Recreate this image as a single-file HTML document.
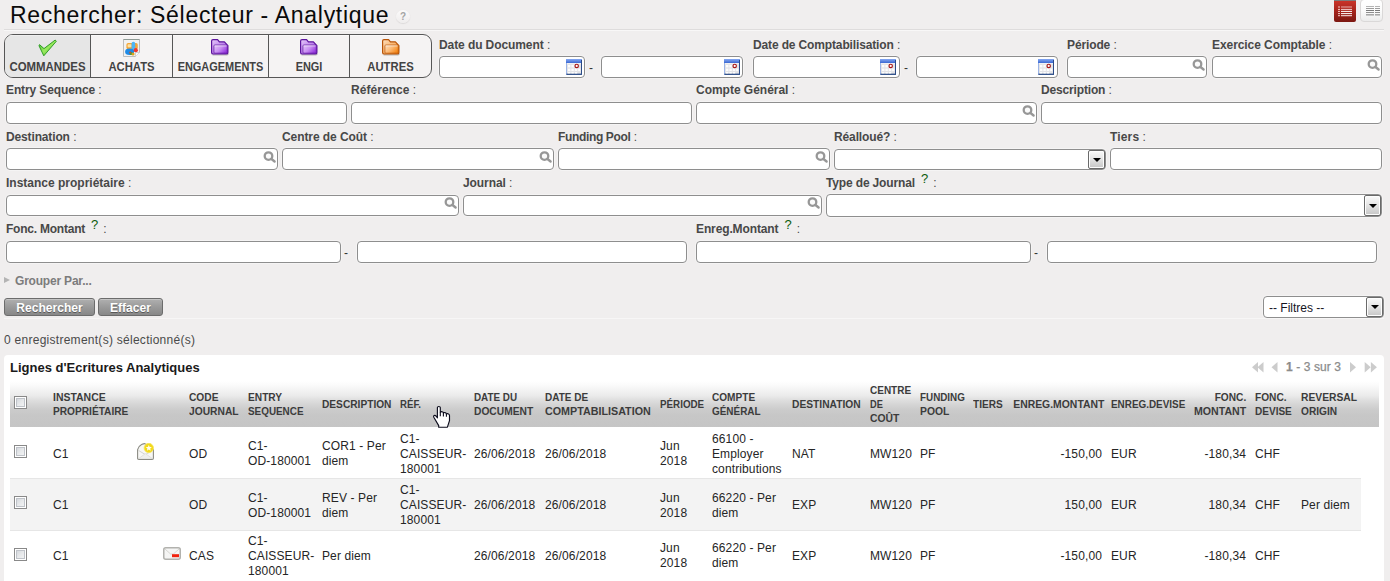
<!DOCTYPE html>
<html lang="fr">
<head>
<meta charset="utf-8">
<title>Rechercher: Sélecteur - Analytique</title>
<style>
html,body{margin:0;padding:0;}
body{width:1390px;height:581px;overflow:hidden;background:#f0eeee;font-family:"Liberation Sans",Arial,Helvetica,sans-serif;font-size:12px;color:#252525;position:relative;}
h1{position:absolute;left:10px;top:2px;margin:0;font-size:23px;font-weight:normal;color:#0a0a0a;line-height:27px;white-space:nowrap;letter-spacing:0.7px;}
.help{position:absolute;left:396px;top:10px;width:14px;height:13px;border-radius:50%;background:linear-gradient(#fbfafa,#efeded);box-shadow:0 1px 1px #dcdada,0 0 1px #e6e4e4;color:#a4a4a4;font-size:10px;font-weight:bold;line-height:13px;text-align:center;}
.hr{position:absolute;left:4px;width:1380px;top:29px;height:1px;background:#dedcdc;border-bottom:1px solid #f8f7f7;}
.vbtn{position:absolute;top:0;width:22px;height:22px;box-sizing:border-box;}
.vbtn svg{position:absolute;left:0;top:0;}
.vbtn.on{left:1334px;background:linear-gradient(#c93429 0%,#a8241c 45%,#7c1711 100%);border-top:1px solid #7c7c7c;border-radius:0 0 2px 2px;}
.vbtn.off{left:1360px;top:-1px;width:23px;height:23px;background:linear-gradient(#ffffff 0%,#fbfbfb 50%,#ececec 100%);border:1px solid #dad8d8;border-radius:4px;}
.vbtn.off svg{left:0.5px;top:1px;}
.tabs{position:absolute;left:4px;top:34px;width:428px;height:44px;box-sizing:border-box;border:1px solid #565656;border-radius:9px;background:#f5f3f3;overflow:hidden;box-shadow:inset 0 1px 0 #fbfafa;}
.tab{position:absolute;top:0;height:42px;box-sizing:border-box;border-left:1px solid #565656;text-align:center;}
.tab:first-child{border-left:0;background:#e6e6e6;box-shadow:inset 0 1px 0 #efefef;}
.tab svg{position:absolute;overflow:visible;}
.tab span{position:absolute;left:0;right:0;top:25px;font-size:12px;font-weight:bold;line-height:14px;color:#424242;white-space:nowrap;}
.fld{position:absolute;height:42px;}
.fld label{position:absolute;left:0;top:0;font-weight:bold;font-size:12px;line-height:14px;color:#484848;white-space:nowrap;}
.fld label i{font-style:normal;font-weight:normal;letter-spacing:0;}
.fld label b.q{font-weight:normal;color:#0b5c0b;font-size:13px;position:relative;top:-4px;margin:0 5px 0 6px;letter-spacing:0;}
.inp{position:absolute;box-sizing:border-box;background:#fff;border:1px solid #8e8e8e;border-radius:4px;box-shadow:0 0 0 1px rgba(255,255,255,0.35);}
.dash{position:absolute;font-size:12px;line-height:14px;color:#333;}
.ico{position:absolute;}
.grp{position:absolute;left:4px;top:274px;font-size:12px;font-weight:bold;line-height:14px;color:#7c7c7c;white-space:nowrap;letter-spacing:-0.2px;}
.grp i{position:absolute;left:0;top:3px;width:0;height:0;border-left:6px solid #b4b4b4;border-top:3.5px solid transparent;border-bottom:3.5px solid transparent;}
.grp span{margin-left:11px;}
.btn{position:absolute;top:298px;height:18px;box-sizing:border-box;border:1px solid #6c6c6c;border-radius:3px;background:linear-gradient(#b0b0b0 0%,#9a9a9a 50%,#888888 100%);color:#fff;font-size:12px;font-weight:bold;line-height:16px;padding-top:1px;text-align:center;text-shadow:0 1px 0 #585858;letter-spacing:0.05px;box-shadow:inset 0 1px 0 #c4c4c4;}
.sline{position:absolute;left:4px;width:1380px;top:318px;height:1px;background:#f7f6f6;}
.arr{position:absolute;right:0;top:0;bottom:0;width:17px;box-sizing:border-box;border:1px solid #6a6a6a;border-radius:2px;background:linear-gradient(#fafafa 0%,#e6e6e6 45%,#c6c6c6 100%);box-shadow:inset 0 0 0 1px #fdfdfd;}
.arr:after{content:"";position:absolute;left:3.5px;top:50%;margin-top:-2px;border-top:4.5px solid #000;border-left:4px solid transparent;border-right:4px solid transparent;}
.count{position:absolute;left:4px;top:333px;font-size:12px;line-height:14px;color:#4a4a4a;letter-spacing:0.27px;white-space:nowrap;}
.panel{position:absolute;left:4px;top:355px;width:1380px;height:240px;background:#fff;border-radius:4px;}
.ptitle{position:absolute;left:6px;top:5px;font-size:13px;font-weight:bold;line-height:15px;color:#1a1a1a;white-space:nowrap;}
.pager{position:absolute;left:1282px;top:5px;font-size:12px;line-height:14px;color:#8c8c8c;white-space:nowrap;letter-spacing:0.1px;-webkit-text-stroke:0.25px #8c8c8c;}
.pg{position:absolute;top:7px;}
table.grid{position:absolute;left:6px;top:26px;width:1369px;border-collapse:collapse;table-layout:fixed;}
table.grid th{height:46px;padding:0 0 0 4px;text-align:left;vertical-align:middle;font-size:11px;font-weight:bold;line-height:14px;color:#3c3c3c;white-space:nowrap;}
table.grid th span{display:block;width:max-content;transform-origin:0 50%;}
table.grid th.r span{margin-left:auto;transform-origin:100% 50%;}
table.grid thead tr{background:linear-gradient(#ffffff 0%,#fafafa 10%,#ebebeb 31%,#dedede 41%,#d3d3d3 52%,#cbcbcb 62%,#c7c7c7 73%,#c5c5c5 100%);}
table.grid td{padding:2px 0 0 4px;vertical-align:middle;font-size:12px;line-height:15px;color:#252525;border-top:1px solid #e6e6e6;letter-spacing:0.12px;}
table.grid td.x{border-top:1px solid #fff;background:#fff !important;}
table.grid tr.first td{border-top-color:#fff;}
table.grid .r{text-align:right;padding-left:0;padding-right:5px;}
table.grid tr.even td{background:#f3f3f3;}
table.grid svg{display:block;}
.cb{display:block;position:relative;top:-3px;width:11px;height:11px;border:1px solid #898989;background:linear-gradient(135deg,#ccd0d6 0%,#e6e8ea 50%,#f8f8f8 100%);box-shadow:inset 0 0 0 1px #ffffff,inset 0 0 0 2px #bfc3c9;}
table.grid tr.last .cb{top:-2px;}
table.grid th span.cb{top:-2px;width:11px;transform:none;}
.hand{position:absolute;left:433px;top:406px;overflow:visible;}
</style>
</head>
<body>
<h1>Rechercher: Sélecteur - Analytique</h1>
<div class="help">?</div>
<div class="hr"></div>
<div class="vbtn on"><svg width="22" height="22" viewBox="0 0 22 22"><rect x="4" y="5.5" width="2" height="1" fill="#f3c9c6"/><rect x="7" y="5.5" width="11" height="1" fill="#e9aeaa"/><rect x="4" y="7.9" width="2" height="1" fill="#f3c9c6"/><rect x="7" y="7.9" width="11" height="1" fill="#f3cfcc"/><rect x="4" y="9.9" width="2" height="1" fill="#f3c9c6"/><rect x="7" y="9.9" width="11" height="1" fill="#ffffff"/><rect x="4" y="12.1" width="2" height="1" fill="#f3c9c6"/><rect x="7" y="12.1" width="11" height="1" fill="#ffffff"/><rect x="4" y="14.2" width="2" height="1" fill="#f3c9c6"/><rect x="7" y="14.2" width="11" height="1" fill="#fbeceb"/></svg></div>
<div class="vbtn off"><svg width="22" height="22" viewBox="0 0 22 22"><rect x="4" y="5" width="8" height="1" fill="#b4b4b4"/><rect x="13" y="5" width="5" height="1" fill="#b4b4b4"/><rect x="4" y="7" width="8" height="1" fill="#9c9c9c"/><rect x="13" y="7" width="5" height="1" fill="#9c9c9c"/><rect x="4" y="9" width="8" height="1" fill="#7a7a7a"/><rect x="13" y="9" width="5" height="1" fill="#7a7a7a"/><rect x="4" y="11" width="8" height="1" fill="#8e8e8e"/><rect x="13" y="11" width="5" height="1" fill="#8e8e8e"/><rect x="4" y="13" width="8" height="1" fill="#a8a8a8"/><rect x="13" y="13" width="5" height="1" fill="#a8a8a8"/><rect x="4" y="14" width="8" height="1" fill="#c8c8c8"/><rect x="13" y="14" width="5" height="1" fill="#c8c8c8"/></svg></div>
<div class="tabs">
<div class="tab" style="left:0px;width:85px"><svg style="left:34px;top:5px" width="18" height="17" viewBox="0 0 18 17"><defs><linearGradient id="ck" x1="0" y1="0" x2="1" y2="1"><stop offset="0" stop-color="#3fb82e"/><stop offset="0.5" stop-color="#9bea5e"/><stop offset="1" stop-color="#2f9e22"/></linearGradient></defs><path d="M0.5 4.6 L5 8.6 L16.2 0 L17.3 1.3 L4.8 15.8 L0 5.8 Z" fill="url(#ck)" stroke="#22961c" stroke-width="0.9" stroke-linejoin="round"/></svg><span style="transform:scaleX(0.952)">COMMANDES</span></div>
<div class="tab" style="left:85px;width:82px"><svg style="left:32px;top:4px" width="18" height="19" viewBox="0 0 18 19"><path d="M0.5 0.5 H16.5 V13.5 L12.5 17.5 H0.5 Z" fill="#f2f2f2" stroke="#bcbcbc"/><path d="M0.5 0.5 H16.5" stroke="#8e9a94" stroke-width="1.2"/><path d="M12.5 17.5 V13.5 H16.5" fill="#fdfdfd" stroke="#c8c8c8" stroke-width="0.8"/><rect x="3.4" y="4" width="11.4" height="6.4" rx="1.8" fill="#f4a63a"/><rect x="4.6" y="5.2" width="4" height="3" rx="0.8" fill="#fbe3a8"/><rect x="8.6" y="2.8" width="3.6" height="9.6" rx="1.7" fill="#4db5f6"/><ellipse cx="6.6" cy="12.8" rx="4.5" ry="3.2" fill="#1e8ae6"/><circle cx="8.2" cy="14.6" r="1.5" fill="#3da23a"/><circle cx="10" cy="14.9" r="1.5" fill="#e0a018"/><circle cx="7.2" cy="13.6" r="1" fill="#d8452a"/><circle cx="12.8" cy="11.2" r="2.1" fill="#ee3a30"/></svg><span style="transform:scaleX(0.939)">ACHATS</span></div>
<div class="tab" style="left:167px;width:96px"><svg style="left:38px;top:4px" width="18" height="17" viewBox="0 0 18 17"><defs><linearGradient id="fpa" x1="0" y1="0" x2="1" y2="1"><stop offset="0" stop-color="#e6ccfa"/><stop offset="1" stop-color="#9a3de0"/></linearGradient><linearGradient id="fpb" x1="0" y1="0" x2="1" y2="0.6"><stop offset="0" stop-color="#e6ccfa"/><stop offset="0.55" stop-color="#c88ef2"/><stop offset="1" stop-color="#9a3de0"/></linearGradient></defs><path d="M1.6 15.9 H16 Q17.4 15.9 17.4 14.6" fill="none" stroke="#6e6e66" stroke-width="1" opacity="0.55"/><path d="M0.6 2 Q0.6 0.6 2 0.6 L6.6 0.6 L8.4 2.8 L13.4 2.8 L16.9 6.6 L16.9 13.6 Q16.9 15 15.4 15 L2.2 15 Q0.6 15 0.6 13.4 Z" fill="url(#fpa)" stroke="#5c149c" stroke-width="1.2" stroke-linejoin="round"/><path d="M2.9 7 Q2.9 6 3.9 6 L15.4 6 Q16.3 6 16.3 7 L16.3 13.2 Q16.3 14.2 15.3 14.2 L3.9 14.2 Q2.9 14.2 2.9 13.2 Z" fill="url(#fpb)" stroke="#5c149c" stroke-width="0.9" stroke-opacity="0.8"/><path d="M3.6 6.9 H15.6" stroke="#ffffff" stroke-width="0.8" opacity="0.75"/></svg><span style="transform:scaleX(0.911)">ENGAGEMENTS</span></div>
<div class="tab" style="left:263px;width:81px"><svg style="left:31px;top:4px" width="18" height="17" viewBox="0 0 18 17"><defs><linearGradient id="fqa" x1="0" y1="0" x2="1" y2="1"><stop offset="0" stop-color="#e6ccfa"/><stop offset="1" stop-color="#9a3de0"/></linearGradient><linearGradient id="fqb" x1="0" y1="0" x2="1" y2="0.6"><stop offset="0" stop-color="#e6ccfa"/><stop offset="0.55" stop-color="#c88ef2"/><stop offset="1" stop-color="#9a3de0"/></linearGradient></defs><path d="M1.6 15.9 H16 Q17.4 15.9 17.4 14.6" fill="none" stroke="#6e6e66" stroke-width="1" opacity="0.55"/><path d="M0.6 2 Q0.6 0.6 2 0.6 L6.6 0.6 L8.4 2.8 L13.4 2.8 L16.9 6.6 L16.9 13.6 Q16.9 15 15.4 15 L2.2 15 Q0.6 15 0.6 13.4 Z" fill="url(#fqa)" stroke="#5c149c" stroke-width="1.2" stroke-linejoin="round"/><path d="M2.9 7 Q2.9 6 3.9 6 L15.4 6 Q16.3 6 16.3 7 L16.3 13.2 Q16.3 14.2 15.3 14.2 L3.9 14.2 Q2.9 14.2 2.9 13.2 Z" fill="url(#fqb)" stroke="#5c149c" stroke-width="0.9" stroke-opacity="0.8"/><path d="M3.6 6.9 H15.6" stroke="#ffffff" stroke-width="0.8" opacity="0.75"/></svg><span style="transform:scaleX(0.91)">ENGI</span></div>
<div class="tab" style="left:344px;width:82px"><svg style="left:32px;top:4px" width="18" height="17" viewBox="0 0 18 17"><defs><linearGradient id="foa" x1="0" y1="0" x2="1" y2="1"><stop offset="0" stop-color="#fde0c0"/><stop offset="1" stop-color="#f58a1e"/></linearGradient><linearGradient id="fob" x1="0" y1="0" x2="1" y2="0.6"><stop offset="0" stop-color="#fde0c0"/><stop offset="0.55" stop-color="#fbb873"/><stop offset="1" stop-color="#f58a1e"/></linearGradient></defs><path d="M1.6 15.9 H16 Q17.4 15.9 17.4 14.6" fill="none" stroke="#6e6e66" stroke-width="1" opacity="0.55"/><path d="M0.6 2 Q0.6 0.6 2 0.6 L6.6 0.6 L8.4 2.8 L13.4 2.8 L16.9 6.6 L16.9 13.6 Q16.9 15 15.4 15 L2.2 15 Q0.6 15 0.6 13.4 Z" fill="url(#foa)" stroke="#b85408" stroke-width="1.2" stroke-linejoin="round"/><path d="M2.9 7 Q2.9 6 3.9 6 L15.4 6 Q16.3 6 16.3 7 L16.3 13.2 Q16.3 14.2 15.3 14.2 L3.9 14.2 Q2.9 14.2 2.9 13.2 Z" fill="url(#fob)" stroke="#b85408" stroke-width="0.9" stroke-opacity="0.8"/><path d="M3.6 6.9 H15.6" stroke="#ffffff" stroke-width="0.8" opacity="0.75"/></svg><span style="transform:scaleX(0.941)">AUTRES</span></div>
</div>
<div class="fld" style="left:439px;top:38px"><label style="letter-spacing:-0.09px">Date du Document<i> :</i></label><span class="inp" style="left:0px;top:18px;width:146px;height:22px"><svg class="ico" style="left:126px;top:2px" width="16" height="16" viewBox="0 0 16 16"><defs><linearGradient id="cg1" x1="0" y1="0" x2="0" y2="1"><stop offset="0" stop-color="#86a8f2"/><stop offset="1" stop-color="#3a68d2"/></linearGradient></defs><rect x="0" y="0" width="16" height="16" fill="#e3e3e6"/><rect x="0" y="0" width="16" height="4" fill="url(#cg1)"/><rect x="0" y="4" width="1" height="12" fill="#9cb4e6"/><rect x="15" y="1" width="1" height="15" fill="#2b4a86"/><rect x="0.5" y="14.6" width="15.5" height="1.4" fill="#35558e"/><path d="M1 4.6H15" stroke="#f6f6f8" stroke-width="0.8"/><g fill="#fdfdfd"><rect x="2" y="6" width="2.4" height="2.4"/><rect x="5.4" y="6" width="2.4" height="2.4"/><rect x="2" y="9.6" width="2.4" height="2.4"/><rect x="5.4" y="9.6" width="2.4" height="2.4"/><rect x="8.8" y="9.6" width="2.4" height="2.4"/><rect x="12.2" y="9.6" width="2" height="2.4"/><rect x="2" y="13" width="2.4" height="1.4"/><rect x="5.4" y="13" width="2.4" height="1.4"/><rect x="8.8" y="13" width="2.4" height="1.4"/></g><circle cx="10.7" cy="6.9" r="1.7" fill="#ffffff" stroke="#a81616" stroke-width="1.15"/></svg></span><span class="dash" style="left:150px;top:23px">-</span><span class="inp" style="left:162px;top:18px;width:142px;height:22px"><svg class="ico" style="left:122px;top:2px" width="16" height="16" viewBox="0 0 16 16"><defs><linearGradient id="cg2" x1="0" y1="0" x2="0" y2="1"><stop offset="0" stop-color="#86a8f2"/><stop offset="1" stop-color="#3a68d2"/></linearGradient></defs><rect x="0" y="0" width="16" height="16" fill="#e3e3e6"/><rect x="0" y="0" width="16" height="4" fill="url(#cg2)"/><rect x="0" y="4" width="1" height="12" fill="#9cb4e6"/><rect x="15" y="1" width="1" height="15" fill="#2b4a86"/><rect x="0.5" y="14.6" width="15.5" height="1.4" fill="#35558e"/><path d="M1 4.6H15" stroke="#f6f6f8" stroke-width="0.8"/><g fill="#fdfdfd"><rect x="2" y="6" width="2.4" height="2.4"/><rect x="5.4" y="6" width="2.4" height="2.4"/><rect x="2" y="9.6" width="2.4" height="2.4"/><rect x="5.4" y="9.6" width="2.4" height="2.4"/><rect x="8.8" y="9.6" width="2.4" height="2.4"/><rect x="12.2" y="9.6" width="2" height="2.4"/><rect x="2" y="13" width="2.4" height="1.4"/><rect x="5.4" y="13" width="2.4" height="1.4"/><rect x="8.8" y="13" width="2.4" height="1.4"/></g><circle cx="10.7" cy="6.9" r="1.7" fill="#ffffff" stroke="#a81616" stroke-width="1.15"/></svg></span></div>
<div class="fld" style="left:753px;top:38px"><label style="letter-spacing:-0.14px">Date de Comptabilisation<i> :</i></label><span class="inp" style="left:0px;top:18px;width:147px;height:22px"><svg class="ico" style="left:126px;top:2px" width="16" height="16" viewBox="0 0 16 16"><defs><linearGradient id="cg3" x1="0" y1="0" x2="0" y2="1"><stop offset="0" stop-color="#86a8f2"/><stop offset="1" stop-color="#3a68d2"/></linearGradient></defs><rect x="0" y="0" width="16" height="16" fill="#e3e3e6"/><rect x="0" y="0" width="16" height="4" fill="url(#cg3)"/><rect x="0" y="4" width="1" height="12" fill="#9cb4e6"/><rect x="15" y="1" width="1" height="15" fill="#2b4a86"/><rect x="0.5" y="14.6" width="15.5" height="1.4" fill="#35558e"/><path d="M1 4.6H15" stroke="#f6f6f8" stroke-width="0.8"/><g fill="#fdfdfd"><rect x="2" y="6" width="2.4" height="2.4"/><rect x="5.4" y="6" width="2.4" height="2.4"/><rect x="2" y="9.6" width="2.4" height="2.4"/><rect x="5.4" y="9.6" width="2.4" height="2.4"/><rect x="8.8" y="9.6" width="2.4" height="2.4"/><rect x="12.2" y="9.6" width="2" height="2.4"/><rect x="2" y="13" width="2.4" height="1.4"/><rect x="5.4" y="13" width="2.4" height="1.4"/><rect x="8.8" y="13" width="2.4" height="1.4"/></g><circle cx="10.7" cy="6.9" r="1.7" fill="#ffffff" stroke="#a81616" stroke-width="1.15"/></svg></span><span class="dash" style="left:151px;top:23px">-</span><span class="inp" style="left:163px;top:18px;width:142px;height:22px"><svg class="ico" style="left:121px;top:2px" width="16" height="16" viewBox="0 0 16 16"><defs><linearGradient id="cg4" x1="0" y1="0" x2="0" y2="1"><stop offset="0" stop-color="#86a8f2"/><stop offset="1" stop-color="#3a68d2"/></linearGradient></defs><rect x="0" y="0" width="16" height="16" fill="#e3e3e6"/><rect x="0" y="0" width="16" height="4" fill="url(#cg4)"/><rect x="0" y="4" width="1" height="12" fill="#9cb4e6"/><rect x="15" y="1" width="1" height="15" fill="#2b4a86"/><rect x="0.5" y="14.6" width="15.5" height="1.4" fill="#35558e"/><path d="M1 4.6H15" stroke="#f6f6f8" stroke-width="0.8"/><g fill="#fdfdfd"><rect x="2" y="6" width="2.4" height="2.4"/><rect x="5.4" y="6" width="2.4" height="2.4"/><rect x="2" y="9.6" width="2.4" height="2.4"/><rect x="5.4" y="9.6" width="2.4" height="2.4"/><rect x="8.8" y="9.6" width="2.4" height="2.4"/><rect x="12.2" y="9.6" width="2" height="2.4"/><rect x="2" y="13" width="2.4" height="1.4"/><rect x="5.4" y="13" width="2.4" height="1.4"/><rect x="8.8" y="13" width="2.4" height="1.4"/></g><circle cx="10.7" cy="6.9" r="1.7" fill="#ffffff" stroke="#a81616" stroke-width="1.15"/></svg></span></div>
<div class="fld" style="left:1067px;top:38px"><label style="letter-spacing:-0.12px">Période<i> :</i></label><span class="inp" style="left:0px;top:18px;width:140px;height:22px"><svg class="ico" style="right:0;top:1px" width="14" height="14" viewBox="0 0 14 14"><circle cx="5.5" cy="6.1" r="3.8" fill="#fbfbfb" stroke="#979797" stroke-width="2.3"/><path d="M8.5 9 L11.6 11.5" stroke="#979797" stroke-width="2.4" stroke-linecap="round"/></svg></span></div>
<div class="fld" style="left:1212px;top:38px"><label style="letter-spacing:-0.07px">Exercice Comptable<i> :</i></label><span class="inp" style="left:0px;top:18px;width:170px;height:22px"><svg class="ico" style="right:0;top:1px" width="14" height="14" viewBox="0 0 14 14"><circle cx="5.5" cy="6.1" r="3.8" fill="#fbfbfb" stroke="#979797" stroke-width="2.3"/><path d="M8.5 9 L11.6 11.5" stroke="#979797" stroke-width="2.4" stroke-linecap="round"/></svg></span></div>
<div class="fld" style="left:6px;top:83px"><label style="letter-spacing:-0.12px">Entry Sequence<i> :</i></label><span class="inp" style="left:0px;top:19px;width:341px;height:22px"></span></div>
<div class="fld" style="left:351px;top:83px"><label style="letter-spacing:0.05px">Référence<i> :</i></label><span class="inp" style="left:0px;top:19px;width:341px;height:22px"></span></div>
<div class="fld" style="left:696px;top:83px"><label style="letter-spacing:-0.02px">Compte Général<i> :</i></label><span class="inp" style="left:0px;top:19px;width:341px;height:22px"><svg class="ico" style="right:0;top:1px" width="14" height="14" viewBox="0 0 14 14"><circle cx="5.5" cy="6.1" r="3.8" fill="#fbfbfb" stroke="#979797" stroke-width="2.3"/><path d="M8.5 9 L11.6 11.5" stroke="#979797" stroke-width="2.4" stroke-linecap="round"/></svg></span></div>
<div class="fld" style="left:1041px;top:83px"><label style="letter-spacing:-0.16px">Description<i> :</i></label><span class="inp" style="left:0px;top:19px;width:341px;height:22px"></span></div>
<div class="fld" style="left:6px;top:130px"><label style="letter-spacing:-0.14px">Destination<i> :</i></label><span class="inp" style="left:0px;top:18px;width:272px;height:22px"><svg class="ico" style="right:0;top:1px" width="14" height="14" viewBox="0 0 14 14"><circle cx="5.5" cy="6.1" r="3.8" fill="#fbfbfb" stroke="#979797" stroke-width="2.3"/><path d="M8.5 9 L11.6 11.5" stroke="#979797" stroke-width="2.4" stroke-linecap="round"/></svg></span></div>
<div class="fld" style="left:282px;top:130px"><label style="letter-spacing:-0.08px">Centre de Coût<i> :</i></label><span class="inp" style="left:0px;top:18px;width:272px;height:22px"><svg class="ico" style="right:0;top:1px" width="14" height="14" viewBox="0 0 14 14"><circle cx="5.5" cy="6.1" r="3.8" fill="#fbfbfb" stroke="#979797" stroke-width="2.3"/><path d="M8.5 9 L11.6 11.5" stroke="#979797" stroke-width="2.4" stroke-linecap="round"/></svg></span></div>
<div class="fld" style="left:558px;top:130px"><label style="letter-spacing:-0.35px">Funding Pool<i> :</i></label><span class="inp" style="left:0px;top:18px;width:272px;height:22px"><svg class="ico" style="right:0;top:1px" width="14" height="14" viewBox="0 0 14 14"><circle cx="5.5" cy="6.1" r="3.8" fill="#fbfbfb" stroke="#979797" stroke-width="2.3"/><path d="M8.5 9 L11.6 11.5" stroke="#979797" stroke-width="2.4" stroke-linecap="round"/></svg></span></div>
<div class="fld" style="left:834px;top:130px"><label style="letter-spacing:-0.12px">Réalloué?<i> :</i></label><span class="inp" style="left:0px;top:19px;width:272px;height:21px"><span class="arr"></span></span></div>
<div class="fld" style="left:1110px;top:130px"><label style="letter-spacing:0.15px">Tiers<i> :</i></label><span class="inp" style="left:0px;top:18px;width:272px;height:22px"></span></div>
<div class="fld" style="left:6px;top:176px"><label style="letter-spacing:0.0px">Instance propriétaire<i> :</i></label><span class="inp" style="left:0px;top:19px;width:453px;height:21px"><svg class="ico" style="right:0;top:0px" width="14" height="14" viewBox="0 0 14 14"><circle cx="5.5" cy="6.1" r="3.8" fill="#fbfbfb" stroke="#979797" stroke-width="2.3"/><path d="M8.5 9 L11.6 11.5" stroke="#979797" stroke-width="2.4" stroke-linecap="round"/></svg></span></div>
<div class="fld" style="left:463px;top:176px"><label style="letter-spacing:-0.09px">Journal<i> :</i></label><span class="inp" style="left:0px;top:19px;width:359px;height:21px"><svg class="ico" style="right:0;top:0px" width="14" height="14" viewBox="0 0 14 14"><circle cx="5.5" cy="6.1" r="3.8" fill="#fbfbfb" stroke="#979797" stroke-width="2.3"/><path d="M8.5 9 L11.6 11.5" stroke="#979797" stroke-width="2.4" stroke-linecap="round"/></svg></span></div>
<div class="fld" style="left:826px;top:176px"><label style="letter-spacing:-0.15px">Type de Journal<b class="q">?</b><i>:</i></label><span class="inp" style="left:0px;top:18px;width:556px;height:23px"><span class="arr"></span></span></div>
<div class="fld" style="left:6px;top:222px"><label style="letter-spacing:-0.23px">Fonc. Montant<b class="q">?</b><i>:</i></label><span class="inp" style="left:0px;top:19px;width:335px;height:22px"></span><span class="dash" style="left:338px;top:24px">-</span><span class="inp" style="left:351px;top:19px;width:330px;height:22px"></span></div>
<div class="fld" style="left:696px;top:222px"><label style="letter-spacing:-0.12px">Enreg.Montant<b class="q">?</b><i>:</i></label><span class="inp" style="left:0px;top:19px;width:335px;height:22px"></span><span class="dash" style="left:338px;top:24px">-</span><span class="inp" style="left:351px;top:19px;width:330px;height:22px"></span></div>
<div class="grp"><i></i><span>Grouper Par...</span></div>
<div class="btn" style="left:4px;width:91px">Rechercher</div>
<div class="btn" style="left:98px;width:65px">Effacer</div>
<div class="inp" style="left:1263px;top:296px;width:121px;height:22px"><span style="position:absolute;left:5px;top:4px;font-size:12px;line-height:14px;color:#15151f;white-space:nowrap">-- Filtres --</span><span class="arr"></span></div>
<div class="sline"></div>
<div class="count">0 enregistrement(s) sélectionné(s)</div>
<div class="panel">
<div class="ptitle">Lignes d'Ecritures Analytiques</div>
<svg class="pg" style="left:1248px" width="30" height="11" viewBox="0 0 30 11" fill="#cccccc"><path d="M6 0 L0 5.2 L6 10.4 Z"/><path d="M11.5 0 L5.5 5.2 L11.5 10.4 Z"/><path d="M25.5 0 L19.5 5.2 L25.5 10.4 Z"/></svg>
<div class="pager"><b>1</b> - 3 sur 3</div>
<svg class="pg" style="left:1346px" width="30" height="11" viewBox="0 0 30 11" fill="#cccccc"><path d="M0 0 L6 5.2 L0 10.4 Z"/><path d="M14.7 0 L20.7 5.2 L14.7 10.4 Z"/><path d="M20.9 0 L26.9 5.2 L20.9 10.4 Z"/></svg>
<table class="grid"><colgroup><col style="width:39px"><col style="width:84px"><col style="width:26px"><col style="width:26px"><col style="width:59px"><col style="width:74px"><col style="width:78px"><col style="width:74px"><col style="width:71px"><col style="width:115px"><col style="width:52px"><col style="width:80px"><col style="width:78px"><col style="width:50px"><col style="width:53px"><col style="width:39px"><col style="width:99px"><col style="width:83px"><col style="width:61px"><col style="width:46px"><col style="width:64px"><col style="width:18px"></colgroup>
<thead><tr><th><span class="cb"></span></th><th><span style="transform:scaleX(0.951)">INSTANCE</span><span style="transform:scaleX(0.922)">PROPRIÉTAIRE</span></th><th></th><th></th><th><span style="transform:scaleX(0.928)">CODE</span><span style="transform:scaleX(0.933)">JOURNAL</span></th><th><span style="transform:scaleX(0.925)">ENTRY</span><span style="transform:scaleX(0.899)">SEQUENCE</span></th><th><span style="transform:scaleX(0.924)">DESCRIPTION</span></th><th><span style="transform:scaleX(0.877)">RÉF.</span></th><th><span style="transform:scaleX(0.896)">DATE DU</span><span style="transform:scaleX(0.931)">DOCUMENT</span></th><th><span style="transform:scaleX(0.908)">DATE DE</span><span style="transform:scaleX(0.976)">COMPTABILISATION</span></th><th><span style="transform:scaleX(0.891)">PÉRIODE</span></th><th><span style="transform:scaleX(0.916)">COMPTE</span><span style="transform:scaleX(0.904)">GÉNÉRAL</span></th><th><span style="transform:scaleX(0.93)">DESTINATION</span></th><th><span style="transform:scaleX(0.909)">CENTRE</span><span style="transform:scaleX(0.84)">DE</span><span style="transform:scaleX(0.94)">COÛT</span></th><th><span style="transform:scaleX(0.896)">FUNDING</span><span style="transform:scaleX(0.94)">POOL</span></th><th><span style="transform:scaleX(0.916)">TIERS</span></th><th class="r"><span style="transform:scaleX(0.946)">ENREG.MONTANT</span></th><th><span style="transform:scaleX(0.9)">ENREG.DEVISE</span></th><th class="r"><span style="transform:scaleX(0.923)">FONC.</span><span style="transform:scaleX(0.963)">MONTANT</span></th><th><span style="transform:scaleX(0.923)">FONC.</span><span style="transform:scaleX(0.912)">DEVISE</span></th><th><span style="transform:scaleX(0.936)">REVERSAL</span><span style="transform:scaleX(0.923)">ORIGIN</span></th><th></th></tr></thead><tbody>
<tr class="odd first" style="height:51px"><td><span class="cb"></span></td><td>C1</td><td><svg style="position:relative;top:-2px" width="18" height="18" viewBox="0 0 18 18"><path d="M0.6 6.6 Q1.4 3.4 4.6 1.6 Q6.4 0.6 7.9 0.6 L16.4 6.6 V15.2 Q16.4 16.4 15.2 16.4 H1.8 Q0.6 16.4 0.6 15.2 Z" fill="#f7f7f5" stroke="#8c8c84" stroke-width="1.1" stroke-linejoin="round"/><path d="M1.4 7.4 L8.4 11.6 L15.6 7.4" fill="none" stroke="#d4d4d0" stroke-width="1"/><path d="M1.6 15.6 L8.4 10.6 L15.4 15.6" fill="#efefec" stroke="#dcdcd8" stroke-width="0.8"/><circle cx="11.8" cy="5" r="4.7" fill="#f2d91c"/><circle cx="11.8" cy="5" r="4.7" fill="none" stroke="#f6e560" stroke-width="0.8"/><path d="M11.8 1.9 L12.7 3.9 L14.9 4.1 L13.2 5.6 L13.7 7.8 L11.8 6.6 L9.9 7.8 L10.4 5.6 L8.7 4.1 L10.9 3.9 Z" fill="#fffdf0"/></svg></td><td></td><td>OD</td><td>C1-<br>OD-180001</td><td>COR1 - Per diem</td><td>C1-<br>CAISSEUR-<br>180001</td><td>26/06/2018</td><td>26/06/2018</td><td>Jun 2018</td><td>66100 - Employer contributions</td><td>NAT</td><td>MW120</td><td>PF</td><td></td><td class="r">-150,00</td><td>EUR</td><td class="r">-180,34</td><td>CHF</td><td></td><td class="x"></td></tr>
<tr class="even" style="height:52px"><td><span class="cb"></span></td><td>C1</td><td></td><td></td><td>OD</td><td>C1-<br>OD-180001</td><td>REV - Per diem</td><td>C1-<br>CAISSEUR-<br>180001</td><td>26/06/2018</td><td>26/06/2018</td><td>Jun 2018</td><td>66220 - Per diem</td><td>EXP</td><td>MW120</td><td>PF</td><td></td><td class="r">150,00</td><td>EUR</td><td class="r">180,34</td><td>CHF</td><td>Per diem</td><td class="x"></td></tr>
<tr class="odd last" style="height:49px"><td><span class="cb"></span></td><td>C1</td><td></td><td><svg style="position:relative;top:-3px" width="18" height="13" viewBox="0 0 18 13"><rect x="0.75" y="0.75" width="16.5" height="11.5" rx="2" fill="#f5f5f4" stroke="#b2b2ae" stroke-width="1.5"/><path d="M2 2 L7.6 7 L10.4 7 L16 2" fill="none" stroke="#d6d6d2" stroke-width="1"/><rect x="9" y="7.2" width="7" height="3" fill="#f0220e"/></svg></td><td>CAS</td><td>C1-<br>CAISSEUR-<br>180001</td><td>Per diem</td><td></td><td>26/06/2018</td><td>26/06/2018</td><td>Jun 2018</td><td>66220 - Per diem</td><td>EXP</td><td>MW120</td><td>PF</td><td></td><td class="r">-150,00</td><td>EUR</td><td class="r">-180,34</td><td>CHF</td><td></td><td class="x"></td></tr>
</tbody></table>
</div>
<svg class="hand" width="18" height="23" viewBox="0 0 18 23"><path d="M4.4 1.6 Q4.4 0.5 5.8 0.5 Q7.3 0.5 7.3 1.6 L7.3 6.4 Q8 5.5 9.1 5.7 Q10.3 5.9 10.4 7 Q11.1 6.3 12.1 6.6 Q13.4 6.9 13.4 8.1 Q14.1 7.5 15.1 7.8 Q16.5 8.3 16.5 9.6 L16.5 14.6 L14.4 21.2 L5.7 21.2 L5.7 19.6 L0.8 11.2 Q0.2 10 1.1 9.5 Q2.1 9 3 10 L4.4 11.8 Z" fill="#ffffff" stroke="#0c0c1c" stroke-width="1.15" stroke-linejoin="round"/><path d="M7.3 6.4V10.2M10.4 7V10.4M13.4 8.1V10.8" stroke="#0c0c1c" stroke-width="1.1" fill="none"/></svg>
</body>
</html>
